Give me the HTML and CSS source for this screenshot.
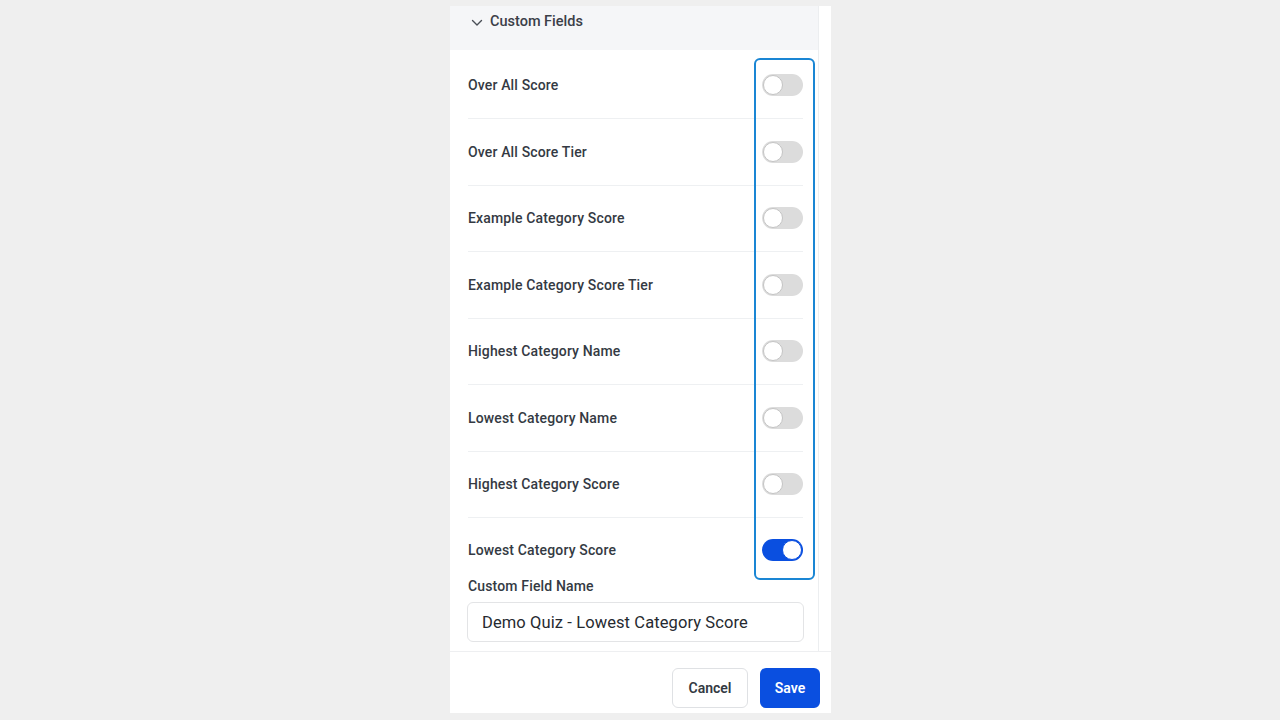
FILE: index.html
```html
<!DOCTYPE html>
<html lang="en">
<head>
    <meta charset="UTF-8">
    <meta name="viewport" content="width=device-width, initial-scale=1.0">
    <title>Custom Fields</title>
    <link rel="stylesheet" href="styles.css">
</head>
<body>
    <div class="panel">
        <div class="scroll-area">
            <div class="content">
                <div class="section-head">
                    <svg class="chevron" width="12" height="8" viewBox="0 0 12 8">
                        <path d="M1.5 1.5 L6 6 L10.5 1.5" fill="none" stroke="#4a4f57" stroke-width="1.4" stroke-linecap="round" stroke-linejoin="round"/>
                    </svg>
                    <span>Custom Fields</span>
                </div>
                <div class="rows">
                    <div class="row"><span class="label">Over All Score</span><span class="toggle"></span></div>
                    <div class="row"><span class="label">Over All Score Tier</span><span class="toggle"></span></div>
                    <div class="row"><span class="label">Example Category Score</span><span class="toggle"></span></div>
                    <div class="row"><span class="label">Example Category Score Tier</span><span class="toggle"></span></div>
                    <div class="row"><span class="label">Highest Category Name</span><span class="toggle"></span></div>
                    <div class="row"><span class="label">Lowest Category Name</span><span class="toggle"></span></div>
                    <div class="row"><span class="label">Highest Category Score</span><span class="toggle"></span></div>
                    <div class="row open"><span class="label">Lowest Category Score</span><span class="toggle on"></span></div>
                    <div class="custom-field">
                        <label for="field-name">Custom Field Name</label>
                        <input type="text" id="field-name" value="Demo Quiz - Lowest Category Score">
                    </div>
                </div>
            </div>
            <div class="scrollbar"></div>
        </div>
        <div class="footer">
            <button class="btn btn-cancel">Cancel</button>
            <button class="btn btn-save">Save</button>
        </div>
        <div class="highlight"></div>
    </div>
</body>
</html>
```

FILE: styles.css
```css
body {
    margin: 0;
    padding: 0;
    background-color: #efefef;
    font-family: Roboto, "Liberation Sans", Arial, sans-serif;
    height: 720px;
    overflow: hidden;
}
.panel {
    position: relative;
    width: 381px;
    height: 707px;
    margin: 6px 0 0 450px;
    background-color: #fff;
    display: flex;
    flex-direction: column;
}
.scroll-area {
    display: flex;
    flex: 1;
}
.content {
    width: 368px;
}
.scrollbar {
    width: 12px;
    border-left: 1px solid #eceef0;
}
.section-head {
    height: 44px;
    box-sizing: border-box;
    padding: 6px 0 0 21px;
    background-color: #f5f6f8;
    display: flex;
    align-items: flex-start;
    color: #3b4048;
    font-size: 14.5px;
    font-weight: 500;
    line-height: 20px;
}
.chevron {
    margin: 7px 7px 0 0;
}
.rows {
    padding: 2.5px 15px 0 18px;
}
.row {
    height: 66.5px;
    box-sizing: border-box;
    border-bottom: 1px solid #eef0f2;
    display: flex;
    align-items: center;
    justify-content: space-between;
}
.row.open {
    height: 55px;
    border-bottom: none;
    align-items: flex-start;
    padding-top: 21px;
}
.label {
    color: #343a43;
    font-size: 14px;
    font-weight: 500;
    line-height: 22px;
    letter-spacing: 0.15px;
}
.toggle {
    position: relative;
    width: 41px;
    height: 22px;
    border-radius: 11px;
    background-color: #dcdcdc;
    box-sizing: border-box;
}
.toggle::after {
    content: "";
    position: absolute;
    top: 1px;
    left: 1px;
    width: 20px;
    height: 20px;
    box-sizing: border-box;
    border-radius: 50%;
    background-color: #fff;
    border: 1px solid #c4c4c4;
}
.toggle.on {
    background-color: #0a4fe0;
}
.toggle.on::after {
    left: 20px;
    border-color: #0a4fe0;
}
.custom-field {
    padding: 3px 0 9px;
    margin-left: -1px;
}
.custom-field label {
    display: block;
    margin-left: 1px;
    color: #343a43;
    font-size: 14px;
    font-weight: 500;
    line-height: 20px;
    letter-spacing: 0.15px;
}
.custom-field input {
    display: block;
    width: calc(100% + 1px);
    height: 40px;
    margin-top: 6px;
    box-sizing: border-box;
    border: 1px solid #e3e4e6;
    border-radius: 6px;
    padding: 0 14px;
    font-family: Roboto, "Liberation Sans", Arial, sans-serif;
    font-size: 16.5px;
    letter-spacing: 0.1px;
    color: #262a30;
}
.footer {
    border-top: 1px solid #eeeff1;
    padding: 16px 11px 5px 0;
    display: flex;
    justify-content: flex-end;
    gap: 12px;
}
.btn {
    height: 40px;
    border-radius: 6px;
    font-family: Roboto, "Liberation Sans", Arial, sans-serif;
    font-size: 14px;
    font-weight: 600;
    cursor: pointer;
}
.btn-cancel {
    width: 76px;
    background-color: #fff;
    border: 1px solid #dfe1e4;
    color: #343a43;
}
.btn-save {
    width: 60px;
    background-color: #0a4fe0;
    border: none;
    color: #fff;
}
.highlight {
    position: absolute;
    left: 304px;
    top: 52px;
    width: 61px;
    height: 522px;
    box-sizing: border-box;
    border: 2px solid #1a86d4;
    border-radius: 6px;
    pointer-events: none;
}
```
